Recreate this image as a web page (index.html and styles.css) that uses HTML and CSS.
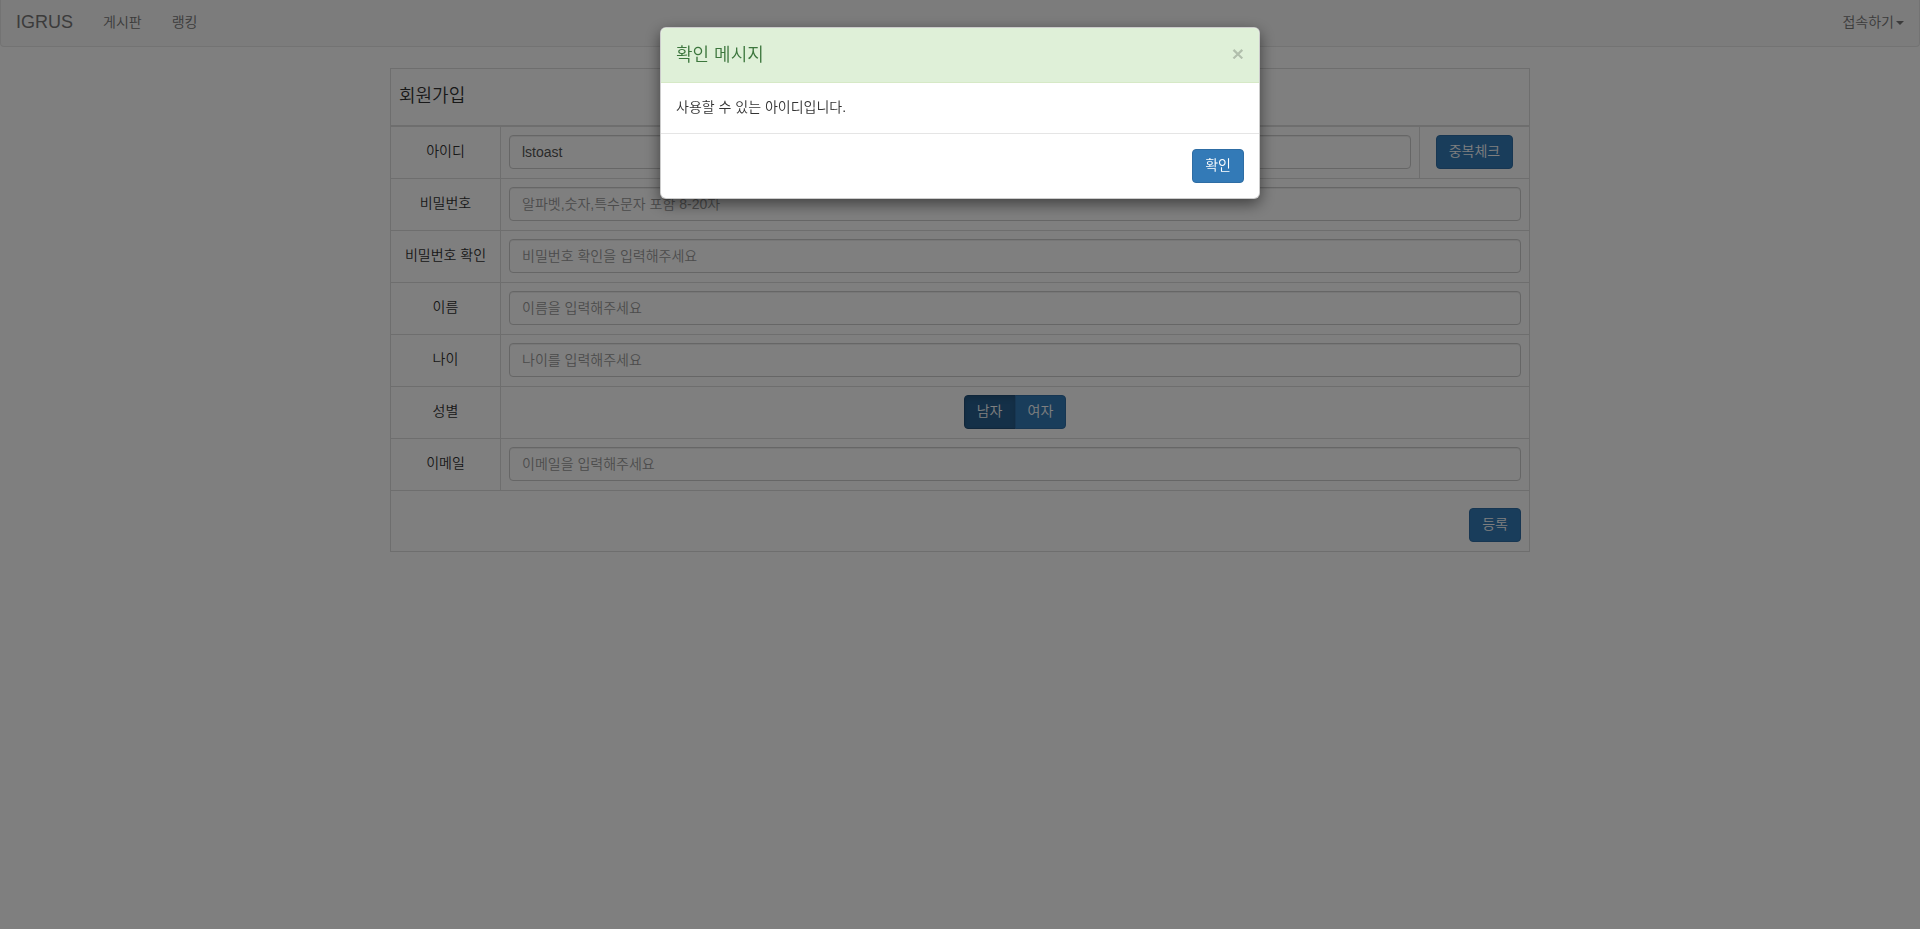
FILE: index.html
```html
<!DOCTYPE html>
<html lang="ko">
<head>
    <meta charset="UTF-8">
    <meta name="viewport" content="width=device-width, initial-scale=1.0">
    <title>IGRUS - 회원가입</title>
    <link rel="stylesheet" href="styles.css">
</head>
<body>

    <nav class="navbar">
        <div class="navbar-left">
            <a class="navbar-brand" href="#">IGRUS</a>
            <a class="nav-link" href="#">게시판</a>
            <a class="nav-link" href="#">랭킹</a>
        </div>
        <div class="navbar-right">
            <a class="nav-link" href="#">접속하기<span class="caret"></span></a>
        </div>
    </nav>

    <div class="container">
        <form id="joinForm">
            <table class="join-table">
                <colgroup>
                    <col class="col-label">
                    <col>
                    <col class="col-side">
                </colgroup>
                <thead>
                    <tr>
                        <th colspan="3"><h4>회원가입</h4></th>
                    </tr>
                </thead>
                <tbody>
                    <tr>
                        <td class="label">아이디</td>
                        <td><input class="form-control" type="text" value="lstoast"></td>
                        <td class="center"><button type="button" class="btn">중복체크</button></td>
                    </tr>
                    <tr>
                        <td class="label">비밀번호</td>
                        <td colspan="2"><input class="form-control" type="password" placeholder="알파벳,숫자,특수문자 포함 8-20자"></td>
                    </tr>
                    <tr>
                        <td class="label">비밀번호 확인</td>
                        <td colspan="2"><input class="form-control" type="password" placeholder="비밀번호 확인을 입력해주세요"></td>
                    </tr>
                    <tr>
                        <td class="label">이름</td>
                        <td colspan="2"><input class="form-control" type="text" placeholder="이름을 입력해주세요"></td>
                    </tr>
                    <tr>
                        <td class="label">나이</td>
                        <td colspan="2"><input class="form-control" type="number" placeholder="나이를 입력해주세요"></td>
                    </tr>
                    <tr>
                        <td class="label">성별</td>
                        <td colspan="2" class="center">
                            <div class="btn-group">
                                <button type="button" class="btn active">남자</button>
                                <button type="button" class="btn">여자</button>
                            </div>
                        </td>
                    </tr>
                    <tr>
                        <td class="label">이메일</td>
                        <td colspan="2"><input class="form-control" type="email" placeholder="이메일을 입력해주세요"></td>
                    </tr>
                    <tr>
                        <td colspan="3">
                            <div class="form-actions">
                                <button type="submit" class="btn">등록</button>
                            </div>
                        </td>
                    </tr>
                </tbody>
            </table>
        </form>
    </div>

    <div class="modal-backdrop"></div>
    <div class="modal">
        <div class="modal-dialog">
            <div class="modal-content">
                <div class="modal-header">
                    <h4 class="modal-title">확인 메시지</h4>
                    <button type="button" class="close">&times;</button>
                </div>
                <div class="modal-body">
                    <p>사용할 수 있는 아이디입니다.</p>
                </div>
                <div class="modal-footer">
                    <button type="button" class="btn">확인</button>
                </div>
            </div>
        </div>
    </div>

</body>
</html>
```

FILE: styles.css
```css
* {
    box-sizing: border-box;
}
body {
    margin: 0;
    font-family: "Liberation Sans", "Noto Sans CJK KR", sans-serif;
    font-size: 14px;
    font-weight: 350;
    line-height: 1.42857;
    color: #333;
    background-color: #fff;
}
a {
    text-decoration: none;
}
.navbar {
    display: flex;
    justify-content: space-between;
    height: 47px;
    margin-bottom: 21px;
    background-color: #f8f8f8;
    border: 1px solid #e7e7e7;
    border-top: none;
    border-radius: 0 0 4px 4px;
}
.navbar-left, .navbar-right {
    display: flex;
}
.navbar-brand {
    padding: 12px 15px 14px;
    font-size: 18px;
    line-height: 20px;
    color: #777;
}
.nav-link {
    padding: 12px 15px 14px;
    line-height: 20px;
    color: #777;
}
.caret {
    display: inline-block;
    width: 0;
    height: 0;
    margin-left: 2px;
    vertical-align: middle;
    border-top: 4px solid;
    border-right: 4px solid transparent;
    border-left: 4px solid transparent;
}
.container {
    width: 1140px;
    margin: 0 auto;
}
.join-table {
    width: 100%;
    table-layout: fixed;
    border-collapse: collapse;
    border: 1px solid #ddd;
}
.col-label {
    width: 110px;
}
.col-side {
    width: 110px;
}
.join-table th, .join-table td {
    padding: 8px 8px 9px;
    border: 1px solid #ddd;
    vertical-align: middle;
}
.join-table thead th {
    padding: 8px;
    border-bottom: 2px solid #ddd;
    text-align: left;
    font-weight: 350;
}
.join-table h4 {
    margin: 10px 0;
    font-size: 18px;
    font-weight: 350;
    line-height: 1.1;
}
.join-table .label, .join-table .center {
    text-align: center;
}
.form-control {
    display: block;
    width: 100%;
    height: 34px;
    padding: 6px 12px;
    font-family: inherit;
    font-size: 14px;
    font-weight: 350;
    line-height: 1.42857;
    color: #555;
    background-color: #fff;
    border: 1px solid #ccc;
    border-radius: 4px;
    box-shadow: inset 0 1px 1px rgba(0, 0, 0, 0.075);
}
.form-control::placeholder {
    color: #999;
}
.btn {
    display: inline-block;
    padding: 6px 12px;
    font-family: inherit;
    font-size: 14px;
    font-weight: 350;
    line-height: 1.42857;
    color: #fff;
    background-color: #337ab7;
    border: 1px solid #2e6da4;
    border-radius: 4px;
    cursor: pointer;
}
.btn.active {
    background-color: #286090;
    border-color: #204d74;
    box-shadow: inset 0 3px 5px rgba(0, 0, 0, 0.125);
}
.btn-group {
    display: inline-flex;
    vertical-align: middle;
}
.btn-group .btn:first-child {
    border-top-right-radius: 0;
    border-bottom-right-radius: 0;
}
.btn-group .btn:last-child {
    margin-left: -1px;
    border-top-left-radius: 0;
    border-bottom-left-radius: 0;
}
.form-actions {
    display: flex;
    justify-content: flex-end;
    padding-top: 9px;
}
.modal-backdrop {
    position: fixed;
    inset: 0;
    background-color: rgba(0, 0, 0, 0.5);
}
.modal {
    position: fixed;
    inset: 0;
    overflow-y: auto;
}
.modal-dialog {
    width: 600px;
    margin: 27px auto;
}
.modal-content {
    overflow: hidden;
    background-color: #fff;
    border: 1px solid rgba(0, 0, 0, 0.2);
    border-radius: 6px;
    box-shadow: 0 5px 15px rgba(0, 0, 0, 0.5);
}
.modal-header {
    display: flex;
    justify-content: space-between;
    align-items: flex-start;
    padding: 15px;
    color: #3c763d;
    background-color: #dff0d8;
    border-bottom: 1px solid #d6e9c6;
}
.modal-title {
    margin: 0;
    font-size: 18px;
    font-weight: 350;
    line-height: 24px;
}
.close {
    padding: 0;
    margin-top: 0;
    font-family: inherit;
    font-size: 21px;
    font-weight: bold;
    line-height: 1;
    color: #000;
    text-shadow: 0 1px 0 #fff;
    background: none;
    border: 0;
    opacity: 0.2;
    cursor: pointer;
}
.modal-body {
    padding: 15px;
}
.modal-body p {
    margin: 0;
}
.modal-footer {
    padding: 15px;
    text-align: right;
    border-top: 1px solid #e5e5e5;
}
```
